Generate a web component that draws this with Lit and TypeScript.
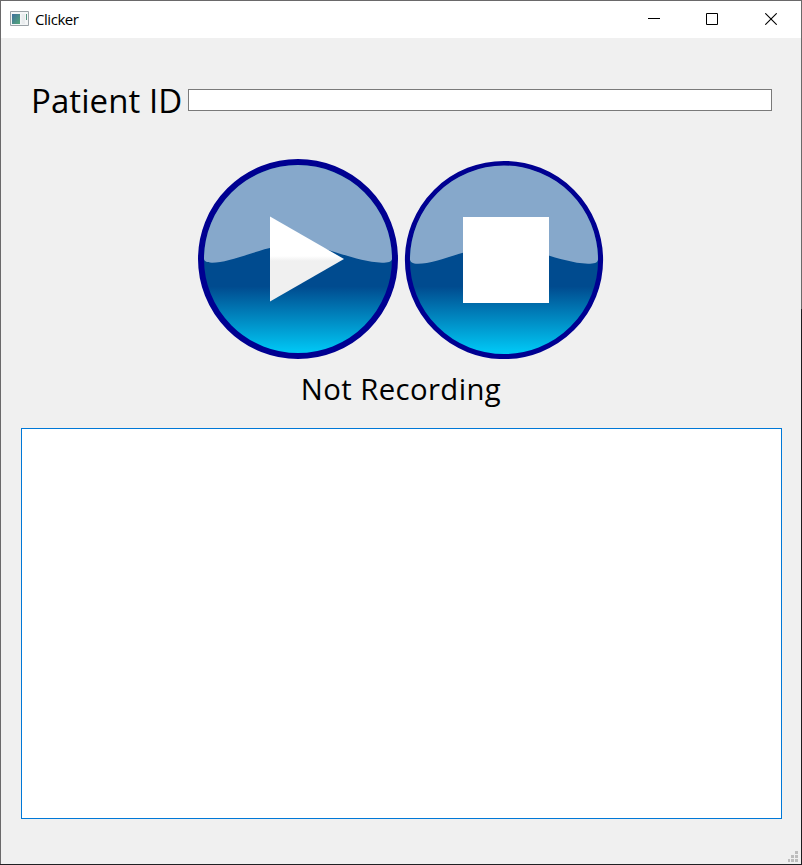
import { LitElement, html, css, svg } from "lit";
import { customElement, property } from "lit/decorators.js";

@customElement("media-button")
class MediaButton extends LitElement {
  @property() kind: "play" | "stop" = "play";

  static styles = css`
    :host { display: block; width: 200px; height: 200px; }
    svg { display: block; }
  `;

  render() {
    const play = this.kind === "play";
    return html`<svg width="200" height="200" viewBox="0 0 200 200" role="img" aria-label=${this.kind}>
      <defs>
        <linearGradient id="body" x1="0" y1="5" x2="0" y2="195" gradientUnits="userSpaceOnUse">
          <stop offset="0" stop-color="#004b8f"/>
          <stop offset=".645" stop-color="#004b8f"/>
          <stop offset=".98" stop-color="#00c4f2"/>
          <stop offset="1" stop-color="#00c8f5"/>
        </linearGradient>
        <linearGradient id="glyph" x1="0" y1="97" x2="0" y2="102" gradientUnits="userSpaceOnUse">
          <stop offset="0" stop-color="#fff"/>
          <stop offset="1" stop-color="#f0f0f0"/>
        </linearGradient>
      </defs>
      ${play
        ? svg`
          <circle cx="100" cy="100" r="97" fill="url(#body)" stroke="#000091" stroke-width="6"/>
          <path d="M6 100A94 94 0 0 1 194 100C193.500 103 190 103.700 184 103.700C156 102.500 129 87.500 99 84C68 86 35 103.700 14 103.700C8 103.700 6.500 102 6 100Z" fill="#86a8cb"/>
          <path d="M72 57.500L146 100L72 142.500Z" fill="url(#glyph)"/>`
        : svg`
          <circle cx="100" cy="101" r="96.600" fill="url(#body)" stroke="#000091" stroke-width="5"/>
          <path d="M6 100.500A94 94 0 0 1 194 100.500C193.500 104 190 104.800 184 104.800C156 103.500 129 88.500 99 85C68 87 35 104.800 14 104.800C8 104.800 6.500 103 6 100.500Z" fill="#86a8cb"/>
          <path d="M59 58H145V144H59Z" fill="#fff"/>`}
    </svg>`;
  }
}

@customElement("app-root")
class AppRoot extends LitElement {
  static styles = css`
    :host {
      display: block;
      width: 802px;
      height: 865px;
      font-family: "Open Sans", "Noto Sans", sans-serif;
      color: #000;
    }
    .frame {
      box-sizing: border-box;
      height: 865px;
      padding: 1px;
      background:
        linear-gradient(#202023, #202023) 0 100% / 100% 1px no-repeat,
        linear-gradient(#6a696a 309px, #1c1b1f 309px) 100% 0 / 1px 100% no-repeat,
        #6a696a;
    }
    .window {
      height: 863px;
      display: flex;
      flex-direction: column;
      background: #f0f0f0;
      overflow: hidden;
    }
    .titlebar {
      height: 37px;
      flex: none;
      display: flex;
      align-items: center;
      background: #fff;
      padding-left: 9px;
    }
    .appicon { display: block; margin: 0 6px 1px 0; }
    .title {
      flex: 1;
      font: 15px/20px "Open Sans", "Noto Sans", sans-serif;
      letter-spacing: -0.450px;
      padding-bottom: 1px;
    }
    .controls { display: flex; margin-right: 1px; }
    .control {
      box-sizing: border-box;
      width: 58.500px;
      height: 37px;
      padding-bottom: 2px;
      display: grid;
      place-items: center;
    }
    .control svg { display: block; }
    .patient {
      display: flex;
      align-items: center;
      margin: 40px 29px 0 30px;
      height: 44px;
    }
    .label {
      width: 157px;
      flex: none;
      font-size: 33px;
      line-height: 44px;
      letter-spacing: 0.080px;
      padding-top: 2px;
      white-space: nowrap;
    }
    .field {
      box-sizing: border-box;
      flex: 1;
      height: 22px;
      background: #fff;
      border: 1px solid #7a7a7a;
    }
    .buttons {
      display: flex;
      justify-content: center;
      gap: 6px;
      margin-top: 37px;
    }
    .status {
      height: 69px;
      text-align: center;
      font-size: 29.300px;
      line-height: 60px;
      letter-spacing: 0.400px;
    }
    .log {
      box-sizing: border-box;
      margin: 0 19px 0 20px;
      height: 391px;
      flex: none;
      background: #fff;
      border: 1px solid #0078d7;
    }
    .footer {
      flex: 1;
      display: flex;
      justify-content: flex-end;
      align-items: flex-end;
      padding: 0 3px 2px 0;
    }
  `;

  render() {
    return html`
      <div class="frame"><main class="window">
        <header class="titlebar">
          <svg class="appicon" width="19" height="16" viewBox="0 0 19 16">
            <defs>
              <linearGradient id="tile" x1="0" y1="0" x2="1" y2="1">
                <stop offset="0" stop-color="#3e6f9e"/>
                <stop offset="1" stop-color="#54a878"/>
              </linearGradient>
            </defs>
            <path d="M.500 .500H18.500V14.500H.500Z" fill="#f4f6f7" stroke="#9ba3a8"/>
            <path d="M2 3H10V13H2Z" fill="url(#tile)"/>
            <path d="M11.500 3H15V13H11.500Z" fill="#e9ecee"/>
            <path d="M16 3H17V9H16Z" fill="#52937f"/>
          </svg>
          <span class="title">Clicker</span>
          <div class="controls">
            <span class="control"><svg width="12" height="12"><path d="M0 5H12V6H0Z"/></svg></span>
            <span class="control"><svg width="12" height="12"><path d="M.500 .500H11.500V11.500H.500Z" fill="none" stroke="#000"/></svg></span>
            <span class="control"><svg width="12" height="12"><path d="M.300 .300L11.700 11.700M11.700 .300L.300 11.700" stroke="#000" stroke-width="1.100"/></svg></span>
          </div>
        </header>
        <div class="patient">
          <span class="label">Patient ID</span>
          <div class="field"></div>
        </div>
        <div class="buttons">
          <media-button kind="play"></media-button>
          <media-button kind="stop"></media-button>
        </div>
        <div class="status">Not Recording</div>
        <div class="log"></div>
        <div class="footer">
          <svg width="10" height="11" viewBox="0 0 10 11" fill="#bdbdbd">
            <path d="M7 0H10V3H7ZM3 4H6V7H3ZM7 4H10V7H7ZM0 8H2V11H0ZM3 8H6V11H3ZM7 8H10V11H7Z"/>
          </svg>
        </div>
      </main></div>
    `;
  }
}
